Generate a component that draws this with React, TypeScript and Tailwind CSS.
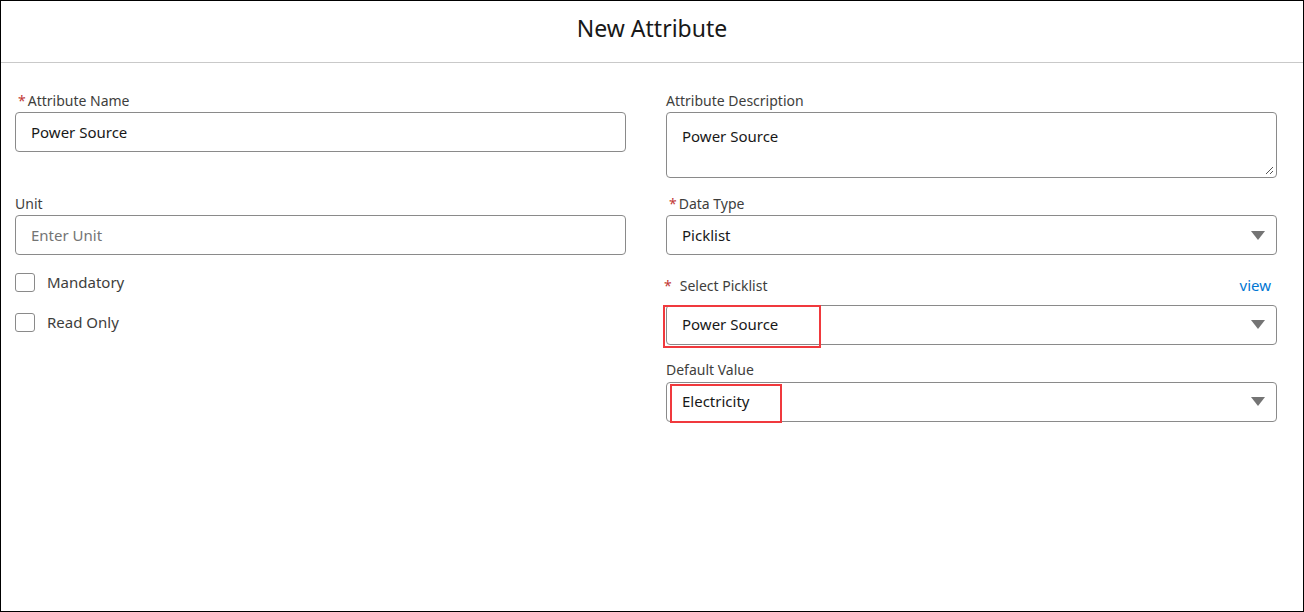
import React from "react";

function Caret() {
  return (
    <svg width="14" height="9" viewBox="0 0 14 9" className="text-[#747474]">
      <path d="M0 0h14L7 9z" fill="currentColor" />
    </svg>
  );
}

function Label({ text, req, wide }: { text: string; req?: boolean; wide?: boolean }) {
  return (
    <div className="h-[20px] flex items-center text-[14px] text-[#3e3e3c]">
      {req && <span className={`text-[#c23934] ${wide ? "mr-2 ml-[-2px]" : "mr-[2px] ml-[3px]"}`}>*</span>}
      {text}
    </div>
  );
}

function Select({ value, box }: { value: string; box?: "a" | "b" }) {
  return (
    <div className="relative h-[40px] border border-[#8a8a8a] rounded-[4px] flex items-center justify-between pl-[15px] pr-[11px] text-[15px] text-[#181818]">
      <span>{value}</span>
      <Caret />
      {box === "a" && <div className="absolute left-[-4px] top-[-1px] w-[158px] h-[43px] border-2 border-[#f0393d]" />}
      {box === "b" && <div className="absolute left-[3px] top-[1px] w-[112px] h-[39px] border-2 border-[#f0393d]" />}
    </div>
  );
}

function Check({ text }: { text: string }) {
  return (
    <div className="flex items-center h-[20px] gap-[12px] text-[15px] text-[#3e3e3c]">
      <div className="w-[20px] h-[19px] border border-[#8a8a8a] rounded-[3px] bg-white" />
      {text}
    </div>
  );
}

export default function App() {
  return (
    <div className="w-[1304px] h-[612px] border border-black bg-white" style={{ fontFamily: '"Noto Sans", "Open Sans", sans-serif' }}>
      <div className="h-[62px] pb-[6px] border-b border-[#c9c9c9] flex items-center justify-center text-[23px] text-[#181818]">
        New Attribute
      </div>
      <div className="flex gap-[40px] px-[14px] pt-[27px]">
        <div className="w-[611px] flex flex-col">
          <Label text="Attribute Name" req />
          <div className="mt-[2px] h-[40px] border border-[#8a8a8a] rounded-[4px] flex items-center px-[15px] text-[15px] text-[#181818]">Power Source</div>
          <div className="mt-[41px]"><Label text="Unit" /></div>
          <div className="mt-[2px] h-[40px] border border-[#8a8a8a] rounded-[4px] flex items-center px-[15px] text-[15px] text-[#747474]">Enter Unit</div>
          <div className="mt-[17px] flex flex-col gap-[20px]">
            <Check text="Mandatory" />
            <Check text="Read Only" />
          </div>
        </div>
        <div className="w-[611px] flex flex-col">
          <Label text="Attribute Description" />
          <div className="relative mt-[2px] h-[66px] border border-[#8a8a8a] rounded-[4px] px-[15px] pt-[12px] text-[15px] text-[#181818]">
            Power Source
            <svg width="9" height="9" viewBox="0 0 9 9" className="absolute right-[2px] bottom-[2px]">
              <path d="M8 1L1 8M8 5L5 8" stroke="#555" strokeWidth="1" />
            </svg>
          </div>
          <div className="mt-[15px]"><Label text="Data Type" req /></div>
          <div className="mt-[2px]"><Select value="Picklist" /></div>
          <div className="mt-[19px] flex justify-between items-center pr-[6px]">
            <Label text="Select Picklist" req wide />
            <span className="text-[15px] text-[#0176d3]">view</span>
          </div>
          <div className="mt-[8px]"><Select value="Power Source" box="a" /></div>
          <div className="mt-[15px]"><Label text="Default Value" /></div>
          <div className="mt-[2px]"><Select value="Electricity" box="b" /></div>
        </div>
      </div>
    </div>
  );
}
